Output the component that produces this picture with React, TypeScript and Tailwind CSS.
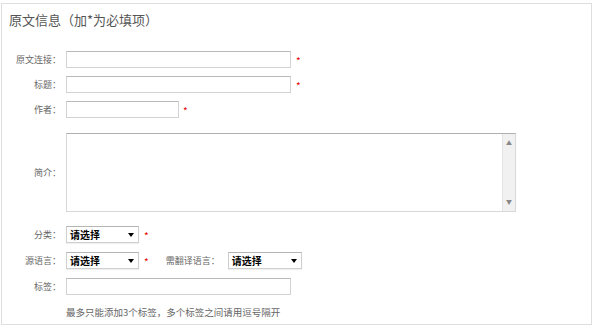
const font = { fontFamily: '"Noto Sans CJK SC", "Noto Sans", sans-serif' };

const Star = ({ ml }: { ml: string }) => (
  <span className={`${ml} text-[10px] leading-none text-[#e60000] translate-y-[1px]`}>*</span>
);

const Label = ({ text }: { text: string }) => (
  <div className="w-[60px] shrink-0 pr-[1px] text-right text-[9px] text-[#666]">{text}</div>
);

const Input = ({ w }: { w: string }) => (
  <input
    type="text"
    className={`${w} h-[17px] ml-[4px] border border-[#d3d3d3] border-t-[#b9b9b9] bg-white outline-none`}
  />
);

const Select = ({ w }: { w: string }) => (
  <div
    className={`${w} ml-[4px] flex h-[17px] shrink-0 items-center justify-between border border-[#cfcfcf] border-t-[#b5b5b5] bg-white pl-[3px] pr-[4px] shadow-[0_1px_1px_rgba(0,0,0,0.06)]`}
  >
    <span className="text-[10px] font-semibold leading-none text-black">请选择</span>
    <span className="h-0 w-0 border-x-[3px] border-t-[4px] border-x-transparent border-t-black" />
  </div>
);

export default function App() {
  return (
    <div className="h-[327px] w-[596px] bg-white pl-[1px] pt-[3px]" style={font}>
      <div className="h-[322px] w-[591px] border border-[#dedede]">
        <div className="h-[32px] pl-[7px] text-[13px] leading-[32px] text-[#555]">原文信息（加*为必填项）</div>

        <div className="mt-[15px] flex flex-col">
          <div className="flex h-[17px] items-center">
            <Label text="原文连接：" />
            <Input w="w-[225px]" />
            <Star ml="ml-[5px]" />
          </div>
          <div className="mt-[8px] flex h-[17px] items-center">
            <Label text="标题：" />
            <Input w="w-[225px]" />
            <Star ml="ml-[5px]" />
          </div>
          <div className="mt-[8px] flex h-[17px] items-center">
            <Label text="作者：" />
            <Input w="w-[113px]" />
            <Star ml="ml-[4px]" />
          </div>

          <div className="mt-[15px] flex h-[79px] items-center">
            <Label text="简介：" />
            <div className="ml-[4px] flex h-full w-[450px] border border-[#d8d8d8] border-t-[#b0b0b0]">
              <textarea className="h-full flex-1 resize-none bg-white outline-none" />
              <div className="flex w-[13px] flex-col items-center justify-between border-l border-[#e4e4e4] bg-[#f1f1f1] py-[6px] text-[6px] leading-none text-[#888]">
                <span>▲</span>
                <span>▼</span>
              </div>
            </div>
          </div>

          <div className="mt-[14px] flex h-[17px] items-center">
            <Label text="分类：" />
            <Select w="w-[73px]" />
            <Star ml="ml-[5px]" />
          </div>
          <div className="mt-[9px] flex h-[17px] items-center">
            <Label text="源语言：" />
            <Select w="w-[73px]" />
            <Star ml="ml-[5px]" />
            <div className="ml-[17px] w-[58px] shrink-0 text-[9px] text-[#666]">需翻译语言：</div>
            <Select w="w-[74px]" />
          </div>
          <div className="mt-[9px] flex h-[17px] items-center">
            <Label text="标签：" />
            <Input w="w-[225px]" />
          </div>
          <div className="mt-[11px] pl-[64px] text-[9.5px] leading-[12px] text-[#666]">
            最多只能添加3个标签，多个标签之间请用逗号隔开
          </div>
        </div>
      </div>
    </div>
  );
}
